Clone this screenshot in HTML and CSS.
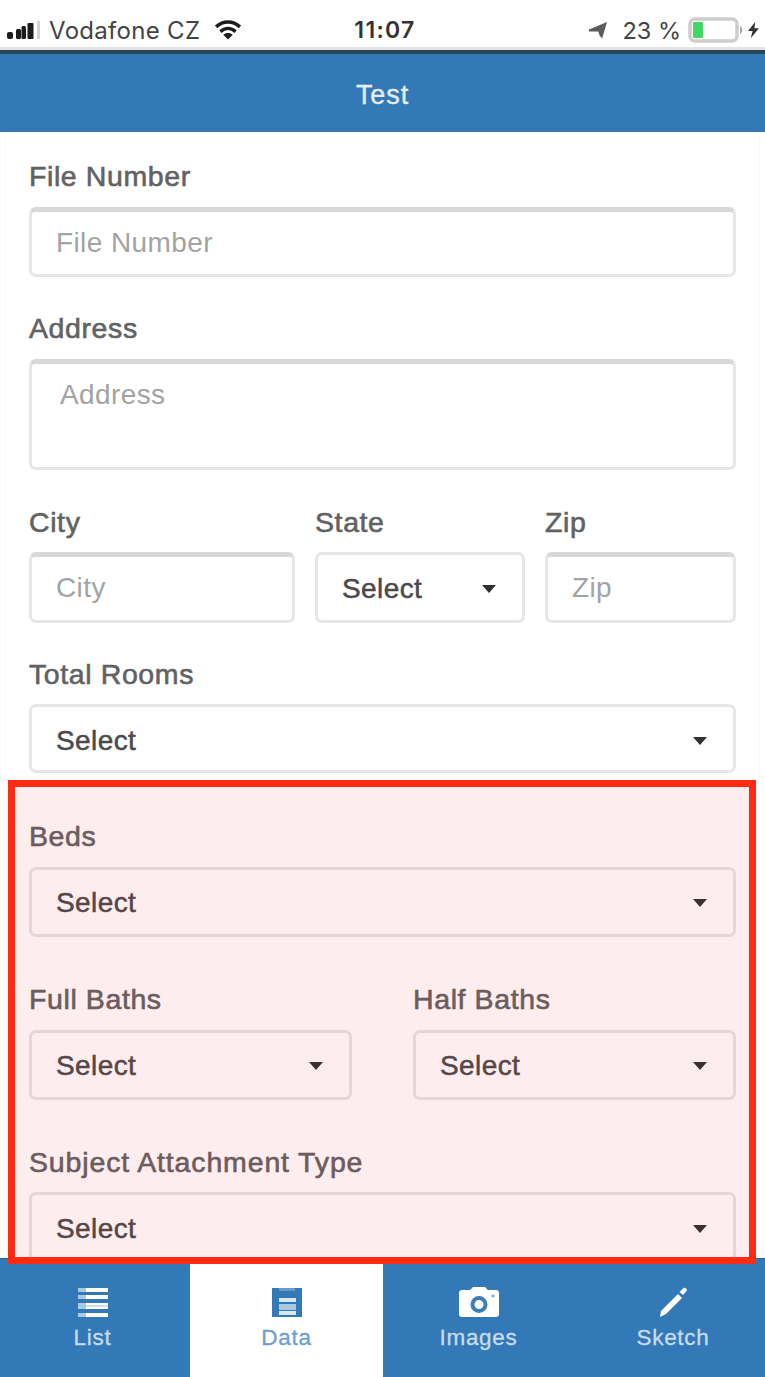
FILE: index.html
```html
<!DOCTYPE html>
<html lang="en">
<head>
<meta charset="utf-8">
<title>Test</title>
<link rel="stylesheet" href="styles.css">
</head>
<body>
<div class="screen">
  <header class="status">
    <div class="carrier">
      <svg width="36" height="20" viewBox="0 0 36 20"><g fill="#1c1c1c"><rect x="1" y="12" width="6" height="7" rx="2"/><rect x="10" y="9" width="5" height="10" rx="1.500"/><rect x="15.500" y="6" width="4.500" height="13" rx="1.500"/><rect x="21.500" y="3" width="6" height="16" rx="1"/></g><rect x="31" y="1" width="3" height="18" fill="#d4d4d4"/></svg>
      <span class="carrier-name">Vodafone CZ</span>
      <svg class="wifi" width="28" height="20" viewBox="0 0 28 21"><g fill="none" stroke="#1d1d1d" stroke-width="3.600"><path d="M1.500 7.200C9 .4 19 .4 26.500 7.200"/><path d="M6 12.200c5-4.500 11-4.500 16 0"/></g><path d="M9 15.500c3-2.600 7-2.600 10 0l-5 5z" fill="#1d1d1d"/></svg>
    </div>
    <span class="time">11:07</span>
    <div class="power">
      <svg width="21" height="19" viewBox="0 0 21 19"><path d="M1 9 20 1l-5 17-3-8z" fill="#5c5c5c"/><path d="M2 9.500h10l2 6" fill="none" stroke="#5c5c5c" stroke-width="2"/></svg>
      <span class="percent">23 %</span>
      <svg class="battery" width="55" height="26" viewBox="0 0 55 26"><rect x="2" y="2" width="47" height="22" rx="5" fill="#fff" stroke="#cdcdcd" stroke-width="3.500"/><rect x="5" y="5" width="10" height="16" rx="1" fill="#43d961"/><path d="M52 9c3 1 3 7 0 8z" fill="#aaa"/></svg>
      <svg class="bolt" width="11" height="18" viewBox="0 0 12 18"><path d="M8 0 0 10h5l-2 8 9-11H7z" fill="#333"/></svg>
    </div>
  </header>
  <div class="title">Test</div>

  <main class="form">
    <div class="row row-file"><div class="field"><span class="label">File Number</span><div class="box input">File Number</div></div></div>
    <div class="row row-address"><div class="field"><span class="label">Address</span><div class="box input area">Address</div></div></div>
    <div class="row row-city">
      <div class="field"><span class="label">City</span><div class="box input">City</div></div>
      <div class="field"><span class="label">State</span><div class="box select">Select<i class="caret"></i></div></div>
      <div class="field"><span class="label">Zip</span><div class="box input">Zip</div></div>
    </div>
    <div class="row row-rooms"><div class="field"><span class="label">Total Rooms</span><div class="box select">Select<i class="caret"></i></div></div></div>
    <div class="row row-beds"><div class="field"><span class="label">Beds</span><div class="box select">Select<i class="caret"></i></div></div></div>
    <div class="row row-baths">
      <div class="field"><span class="label">Full Baths</span><div class="box select">Select<i class="caret"></i></div></div>
      <div class="field"><span class="label">Half Baths</span><div class="box select">Select<i class="caret"></i></div></div>
    </div>
    <div class="row row-type"><div class="field"><span class="label label-wide">Subject Attachment Type</span><div class="box select">Select<i class="caret"></i></div></div></div>
  </main>

  <nav class="tabs">
    <div class="tab">
      <svg width="32" height="33" viewBox="0 0 32 33"><g fill="#fff"><path d="M9 2h22v4H9zM9 9h22v4H9zM9 17h22v6H9zM9 27h22v4H9z"/><path opacity=".6" d="M1 2h8v4H1zM1 9h8v4H1zM1 17h8v6H1zM1 27h8v4H1z"/></g><path d="M9 20h22" stroke="#bdd4e8" stroke-width="1.500"/></svg>
      <span>List</span>
    </div>
    <div class="tab active">
      <svg width="32" height="33" viewBox="0 0 32 33"><path d="M1 2h30v29H1z" fill="#3378b7"/><path d="M8 2h16v3H8z" fill="#679bca"/><path d="M8 12h17v4H8zM8 25h17v4H8z" fill="#d9e7f3"/><path d="M8 18h17v6H8z" fill="#a9c8e2"/></svg>
      <span>Data</span>
    </div>
    <div class="tab">
      <svg width="40" height="33" viewBox="0 0 40 33"><path d="M3 4h8l3-3h12l3 3h8q3 0 3 3v21q0 3-3 3H3q-3 0-3-3V7q0-3 3-3z" fill="#fff"/><circle cx="20" cy="18.500" r="6.500" fill="#fff" stroke="#3b7fba" stroke-width="4"/><circle cx="34" cy="10" r="1.500" fill="#78a8d1"/></svg>
      <span>Images</span>
    </div>
    <div class="tab">
      <svg width="32" height="33" viewBox="0 0 32 33"><path d="m3 31 1-6L21 8l4 4L9 28zM22.500 6l4-4q2-1 3 1 1 1 0 2l-3.500 4z" fill="#fff"/></svg>
      <span>Sketch</span>
    </div>
  </nav>
  <div class="highlight"></div>
</div>
</body>
</html>
```
FILE: styles.css
```css
* { box-sizing: border-box; }
body { margin: 0; background: #fff; font-family: "Liberation Sans", Arial, sans-serif; }
.screen { position: relative; width: 765px; height: 1377px; overflow: hidden; display: flex; flex-direction: column; }
svg { display: block; flex: none; }

.status { height: 50px; flex: none; display: grid; grid-template-columns: 1fr auto 1fr; align-items: center; padding: 13px 6px 0 6px; border-bottom: 3px solid #e8e3de; color: #333; white-space: nowrap; font-family: Inter, "Liberation Sans", sans-serif; font-size: 23.5px; }
.carrier, .power { display: flex; align-items: center; }
.carrier-name { margin-left: 7px; font-size: 24px; letter-spacing: .3px; color: #444; }
.wifi { margin-left: 14px; }
.time { padding-left: 5px; font-weight: 600; font-size: 23px; letter-spacing: 1.3px; }
.power { justify-content: flex-end; }
.percent { margin-left: 14px; color: #444; }
.battery { margin-left: 7px; }
.bolt { margin-left: 5px; }

.title { height: 82px; flex: none; border-top: 4px solid #28445b; background: #3378b7; color: #e3edf6; font-size: 27px; line-height: 83px; letter-spacing: .9px; text-align: center; -webkit-text-stroke: .4px #e3edf6; }

.form { flex: 1; min-height: 0; overflow: hidden; margin: 0 5px; padding: 28px 23px 0; border-left: 1px solid #fafafa; border-right: 1px solid #fafafa; }
.row { display: grid; grid-template-columns: 1fr; }
.field { display: flex; flex-direction: column; min-width: 0; }
.label { height: 47px; flex: none; line-height: 32px; font-size: 28.5px; letter-spacing: .6px; color: #626262; white-space: nowrap; -webkit-text-stroke: .6px #626262; }
.label-wide { letter-spacing: .85px; }
.box { flex: 1; display: flex; align-items: center; justify-content: space-between; padding: 2px 26px 0 24px; border: 3px solid #e6e6e6; border-radius: 7px; font-size: 28px; color: #4a4a4a; letter-spacing: .4px; }
.input { border-top: 5px solid #d8d8d8; color: #a3a3a3; padding: 0 26px 1px 24px; }
.area { align-items: flex-start; padding: 15px 28px 0; }
.select { -webkit-text-stroke: .5px #4a4a4a; }
.caret { border: 7px solid transparent; border-top: 8px solid #303030; border-bottom: 0; }

.row-file { height: 117px; margin-bottom: 35px; }
.row-address { height: 158px; margin-bottom: 36px; }
.row-city { height: 117px; margin-bottom: 35px; grid-template-columns: 266px 210px 191px; justify-content: space-between; }
.row-city .label { height: 46px; }
.row-rooms { height: 115px; margin-bottom: 47px; }
.row-rooms .label { height: 46px; }
.row-rooms .box { padding-top: 5px; }
.row-beds { height: 117px; margin-bottom: 46px; }
.row-baths { height: 117px; margin-bottom: 46px; grid-template-columns: 323px 323px; justify-content: space-between; }
.row-type { height: 117px; }
.row-type .label { height: 46px; }

.tabs { height: 119px; flex: none; display: grid; grid-template-columns: 190px 193px 191px 191px; background: #3378b7; border-top: 1px solid #28659c; }
.tab { display: flex; flex-direction: column; align-items: center; padding-top: 27px; font-size: 22.5px; line-height: 28px; color: #c7dced; letter-spacing: .7px; -webkit-text-stroke: .3px; }
.tab:first-child { padding-right: 5px; }
.tab span { margin-top: 5px; }
.tab.active { background: #fff; color: #6ba0cc; }
.tab:last-child { padding-left: 7px; }

.highlight { position: absolute; left: 8px; top: 780px; width: 748px; height: 484px; border: 7px solid #ff2a12; background: rgba(235, 25, 50, .08); }
```
